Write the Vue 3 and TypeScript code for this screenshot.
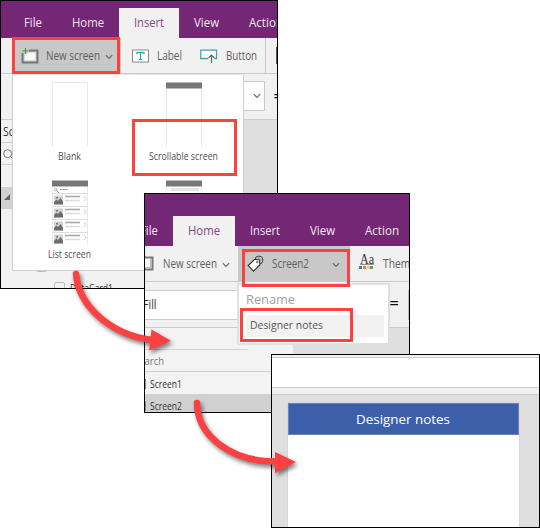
<script setup lang="ts">
import { defineComponent, h } from 'vue'

// Single-line label drawn at an exact width, baseline 14px below its top.
const Fit = defineComponent({
  props: {
    t: { type: String, required: true },
    w: { type: Number, required: true },
    s: { type: Number, default: 12.2 },
  },
  setup(p) {
    return () =>
      h('svg', { class: 'fit', width: p.w, height: 20 }, [
        h('text', { x: 0, y: 14, 'font-size': p.s, textLength: p.w, lengthAdjust: 'spacingAndGlyphs', fill: 'currentColor' }, p.t),
      ])
  },
})

interface Tab { name: string; w: number }
const tabs: Tab[] = [
  { name: 'File', w: 18 },
  { name: 'Home', w: 32 },
  { name: 'Insert', w: 30 },
  { name: 'View', w: 25 },
  { name: 'Action', w: 34 },
]
const rows = [0, 1, 2, 3]
</script>

<template>
  <main class="stage">
    <section class="win win-insert">
      <header class="ribbon">
        <span v-for="tab in tabs" :key="tab.name" class="tab" :class="{ active: tab.name === 'Insert' }">
          <Fit :t="tab.name" :w="tab.w" :s="12.6" />
        </span>
      </header>
      <div class="toolbar tools-insert">
        <div class="new-btn">
          <svg class="ic-new" width="18" height="16" viewBox="0 0 18 16">
            <path d="M1.5 5v9.500H16.500V2.500H8" fill="none" stroke="#777" stroke-width="2" />
            <path d="M3.500 6v6.500H14.500V4.500H8" fill="#f8f8f8" stroke="#ddd" />
            <path d="M4.500 0v6M1.500 3h6" stroke="#46a049" stroke-width="1.2" />
          </svg>
          <Fit t="New screen" :w="54" />
          <svg class="chev" width="8" height="6" viewBox="0 0 8 6"><path d="M.8 1.200L4 4.400 7.200 1.200" /></svg>
        </div>
        <svg class="ic-label" width="17" height="14" viewBox="0 0 17 14">
          <rect x=".5" y="1" width="16" height="12" fill="#fff" stroke="#8a8a8a" />
          <path d="M5 5V3.500h7V5M8.500 3.500v7M7 10.500h3" fill="none" stroke="#1fa5a5" stroke-width="1.200" />
        </svg>
        <Fit class="t-label" t="Label" :w="25" />
        <svg class="ic-button" width="18" height="15" viewBox="0 0 18 15">
          <path d="M8 9.500H.8V1.200H16.500v8.300h-2" fill="#fff" stroke="#35aaaa" stroke-width="1.300" />
          <path d="M11.500 14V6M8.500 9l3-3 3 3" fill="none" stroke="#666" stroke-width="1.200" />
        </svg>
        <Fit class="t-button" t="Button" :w="31" />
        <i class="divider"></i><i class="cut"></i>
      </div>
      <div class="formula f1">
        <div class="select"><svg class="chev" width="8" height="6" viewBox="0 0 8 6"><path d="M.8 1.200L4 4.400 7.200 1.200" /></svg></div>
        <span class="eq">=</span>
      </div>
      <div class="body1">
        <aside class="side1">
          <div class="s-title"><Fit t="Screens" :w="38" /></div>
          <div class="s-search">
            <svg width="11" height="11" viewBox="0 0 11 11"><circle cx="4.700" cy="4.700" r="4" fill="none" stroke="#777" /><path d="M7.500 7.500L10 10" stroke="#777" /></svg>
          </div>
          <div class="s-gap"></div>
          <div class="s-sel"><svg width="6" height="6" viewBox="0 0 6 6"><path d="M6 0v6H0z" fill="#666" /></svg></div>
          <div class="s-card2"><i></i></div>
          <div class="s-card"><i></i><Fit t="DataCard1" :w="43" :s="11" /></div>
        </aside>
        <div class="canvas"></div>
      </div>
      <div class="menu1">
        <div class="cell">
          <div class="thumb"></div>
          <Fit t="Blank" :w="23" :s="10.800" />
        </div>
        <div class="cell">
          <div class="thumb"><b></b></div>
          <Fit t="Scrollable screen" :w="69" :s="10.800" />
        </div>
        <div class="cell">
          <div class="thumb list">
            <b></b>
            <div class="find"><svg width="5" height="5" viewBox="0 0 5 5"><circle cx="1.700" cy="1.700" r="1.200" fill="none" stroke="#999" stroke-width=".8" /><path d="M2.600 2.600L5 5" stroke="#999" /></svg><i></i></div>
            <div v-for="r in rows" :key="r" class="row">
              <svg width="36" height="13" viewBox="0 0 36 13">
                <path d="M0 .5h36" stroke="#ddd" />
                <rect x="2" y="2.500" width="9" height="9" fill="#d2d2d2" />
                <path d="M2 11.500V9l2.500-2.500L6 8l2.500-3L11 8.500v3z" fill="#6d6d6d" />
                <circle cx="5" cy="4.800" r="1" fill="#777" />
                <path d="M13 3.500h15" stroke="#a8a8b0" stroke-width="1.600" />
                <path d="M13 7.500h15" stroke="#ddd" stroke-width="1.600" />
                <path d="M32 3l2 2.500-2 2.500" fill="none" stroke="#ccc" />
              </svg>
            </div>
          </div>
          <Fit t="List screen" :w="43" :s="10.800" />
        </div>
        <div class="cell">
          <div class="thumb"><b></b><div class="peek"></div></div>
        </div>
      </div>
      <div class="mark m-new"></div>
      <div class="mark m-scroll"></div>
    </section>

    <section class="win win-home">
      <header class="ribbon">
        <span v-for="tab in tabs" :key="tab.name" class="tab" :class="{ active: tab.name === 'Home' }">
          <Fit :t="tab.name" :w="tab.w" :s="12.6" />
        </span>
      </header>
      <div class="toolbar tools-home">
        <svg class="ic-new2" width="18" height="16" viewBox="0 0 18 16">
          <path d="M1.500 5v9.500H16.500V2.500H8" fill="#f8f8f8" stroke="#777" stroke-width="2" />
          <path d="M14.500 4v8.500H3" fill="none" stroke="#bbb" />
        </svg>
        <Fit t="New screen" :w="54" />
        <svg class="chev" width="8" height="6" viewBox="0 0 8 6"><path d="M.8 1.200L4 4.400 7.200 1.200" /></svg>
        <div class="screen-btn">
          <svg width="18" height="18" viewBox="0 0 18 18">
            <circle cx="12" cy="5" r="4" fill="none" stroke="#444" />
            <path d="M1.200 10.500L7.800 4.300l4.500.4.700 5-6.500 6.500z" fill="#fff" stroke="#333" stroke-width="1.100" />
            <path d="M12 1v4h4" stroke="#777" stroke-width=".8" fill="none" />
            <circle cx="10.300" cy="7" r=".9" fill="none" stroke="#444" stroke-width=".8" />
          </svg>
          <Fit t="Screen2" :w="37" />
          <svg class="chev" width="8" height="6" viewBox="0 0 8 6"><path d="M.8 1.200L4 4.400 7.200 1.200" /></svg>
        </div>
        <div class="theme-ic">
          <svg width="16" height="16" viewBox="0 0 16 16">
            <text x="1" y="10" class="aa" textLength="14" lengthAdjust="spacingAndGlyphs">Aa</text>
            <path d="M1 10.500h14" stroke="#666" stroke-width=".7" />
            <rect x="0" y="12" width="3" height="3" fill="#3b78bf" /><rect x="4" y="12" width="3" height="3" fill="#ee8132" />
            <rect x="8" y="12" width="3" height="3" fill="#ebcb88" /><rect x="11" y="12" width="3" height="3" fill="#55998a" />
          </svg>
        </div>
        <Fit t="Theme" :w="33" />
      </div>
      <div class="formula f2">
        <div class="field"><Fit t="Fill" :w="13.500" :s="12.8" /></div>
        <span class="eq">=</span>
        <i class="edge"></i>
      </div>
      <div class="body2">
        <aside class="side2">
          <div class="h-title"></div>
          <div class="h-search"><Fit t="Search" :w="30" :s="11" /></div>
          <div class="h-item"><i></i><Fit t="Screen1" :w="32" :s="11" /></div>
          <div class="h-item on"><i></i><Fit t="Screen2" :w="32" :s="11" /></div>
        </aside>
        <div class="canvas"></div>
      </div>
      <div class="menu2">
        <div class="m-rename"><Fit t="Rename" :w="49" :s="13.200" /></div>
        <div class="m-notes"><Fit t="Designer notes" :w="73" :s="11.400" /></div>
      </div>
      <div class="mark m-screen"></div>
      <div class="mark m-des"></div>
    </section>

    <section class="win win-notes">
      <div class="strip"></div>
      <div class="white"></div>
      <div class="strip low"></div>
      <div class="desk">
        <div class="page"><div class="title"><Fit t="Designer notes" :w="94" :s="13.400" /></div></div>
      </div>
    </section>

    <svg class="arrows" width="540" height="528" viewBox="0 0 540 528">
      <g>
        <path d="M76 274C78 303 107 334 152 340" class="tail" />
        <path d="M151.500 329.500L171 340.700 149 350.500z" class="head" />
      </g>
      <g>
        <path d="M197 403C197 434 229 462 277 461.500" class="tail" />
        <path d="M275 452L296 462 275 473z" class="head" />
      </g>
    </svg>
  </main>
</template>

<style>
body { background: #fff; overflow: hidden; }
.fit { display: block; overflow: visible; flex: none; }
</style>

<style scoped>
* { box-sizing: border-box; }
.stage { position: relative; width: 540px; height: 528px; overflow: hidden; background: #fff; font-family: "Open Sans", "Noto Sans", sans-serif; color: #606060; }
.win { position: absolute; border: 1px solid #000; overflow: hidden; background: #f1f1f1; display: flex; flex-direction: column; }
.win-insert { left: 0; top: 0; width: 278px; height: 289px; }
.win-home { left: 144px; top: 193px; width: 266px; height: 220px; }
.win-notes { left: 271px; top: 354px; width: 269px; height: 174px; }
.ribbon { display: flex; align-items: flex-end; flex: none; background: #742774; color: #f0e6f0; }
.win-insert .ribbon { height: 37px; padding-left: 7.500px; }
.win-home .ribbon { height: 52px; padding-left: 0; }
.win-home .tab:first-child { margin-left: -20.500px; }
.tab { flex: none; height: 30px; padding: 0 15px; display: flex; align-items: center; }
.tab.active { background: #f1f1f1; color: #86478a; }
.toolbar { display: flex; align-items: center; flex: none; height: 36px; border-bottom: 1px solid #cacaca; background: #f1f1f1; }
.toolbar > *, .new-btn > *, .screen-btn > * { flex: none; }
.chev path { fill: none; stroke: #666; stroke-width: 1.100; }
.new-btn { width: 109px; height: 36px; margin-left: 11px; background: #c8c8c8; display: flex; align-items: center; padding-left: 9px; }
.new-btn .ic-new { margin-right: 7px; }
.new-btn .chev { margin: 2px 0 0 5px; }
.ic-label { margin-left: 11px; }
.t-label { margin-left: 8px; }
.ic-button { margin-left: 18px; margin-top: 2px; }
.t-button { margin-left: 8px; }
.divider { width: 1px; height: 35px; margin-left: 8px; background: #ccc; }
.cut { width: 2px; height: 17px; margin-left: 10px; background: #555; }
.formula { display: flex; align-items: center; flex: none; background: #f1f1f1; border-bottom: 1px solid #ccc; }
.f1 { height: 46px; padding-left: 220px; }
.select { width: 44px; height: 30px; margin-top: -1px; flex: none; border: 1px solid #c9c9c9; background: #fff; display: flex; align-items: center; justify-content: flex-end; padding-right: 3px; }
.eq { flex: none; font-size: 17px; line-height: 20px; color: #111; }
.f1 .eq { margin-left: 8.500px; margin-top: -2px; }
.body1, .body2 { display: flex; flex: 1; min-height: 0; }
.side1 { width: 242px; flex: none; overflow: hidden; background: #f2f2f2; }
.canvas { flex: 1; background: #dfdfdf; }
.s-title { height: 23px; padding: 2px 0 0 2px; border-bottom: 1px solid #ccc; color: #333; }
.s-search { height: 22px; padding: 6px 0 0 2px; border-bottom: 1px solid #ccc; }
.s-search svg { display: block; }
.s-gap { height: 22px; }
.s-sel { height: 22px; background: #d1d1d1; padding: 7px 0 0 3px; display: flex; }
.s-card2 { height: 74px; display: flex; align-items: flex-end; padding-left: 35px; }
.s-card2 i { width: 11px; height: 11px; margin-bottom: 11px; border: 1px solid #bbb; border-radius: 2px; }
.s-card { display: flex; height: 22px; margin-top: -2px; padding-left: 53px; color: #333; }
.s-card i { width: 11px; height: 11px; margin: 1px 5px 0 0; border: 1px solid #bbb; border-radius: 2px; }
.s-card .fit { margin-top: -3px; }
.menu1 { position: absolute; left: 11px; top: 73px; width: 232px; height: 197px; background: #fff; border: 1px solid #cfcfcf; border-top-color: #e6e6e6; display: grid; grid-template-columns: 114px 114px; grid-template-rows: 98px 98px; padding-top: 7px; overflow: hidden; }
.cell { display: flex; flex-direction: column; align-items: center; color: #505050; font-weight: 500; }
.cell .fit { margin-top: -1px; margin-left: -1px; }
.thumb { width: 36px; height: 65px; border: 1px solid #e8e8e8; border-width: 1px 1px 0; display: flex; flex-direction: column; flex: none; }
.thumb b { height: 7px; margin: -1px -1px 0; border: 1px solid #bbb; border-width: 1px 0; background: #757779; flex: none; }
.list .find { height: 6px; display: flex; gap: 1px; padding: 1px 0 0 1px; flex: none; }
.find i { width: 8px; height: 1px; background: #aaa; margin-top: 1px; }
.row { height: 13.300px; margin-left: -1px; }
.row svg { display: block; }
.peek { height: 10px; margin: 1px 2px 0 4px; border-top: 3px solid #e5e5e5; border-right: 1px solid #eee; }
.mark { position: absolute; border: 3px solid #fb4141; }
.m-new { left: 11px; top: 36px; width: 108px; height: 37px; }
.m-scroll { left: 131px; top: 118px; width: 105px; height: 57px; }
.ic-new2 { margin-left: -9px; margin-right: 9px; margin-top: -1px; }
.tools-home > .chev { margin: 2px 0 0 5px; }
.screen-btn { width: 112px; height: 35px; margin-left: 8px; background: #c8c8c8; display: flex; align-items: center; padding-left: 9px; }
.screen-btn .fit { margin-left: 7px; }
.screen-btn .chev { margin: 2px 0 0 23px; }
.theme-ic { margin: -4px 8px 0 9px; height: 16px; }
.theme-ic svg { display: block; }
.aa { font: 14px "Liberation Serif", serif; fill: #333; }
.f2 { height: 46px; border-bottom: 1px solid #ccc; }
.field { width: 244px; height: 30px; flex: none; border: 1px solid #ccc; border-left: 0; background: #fff; padding: 4px 0 0 0; color: #333; }
.field .fit { margin-left: -2px; }
.f2 .eq { width: 10px; text-align: center; margin: -3px 0 0 0; }
.f2 .edge { width: 1px; height: 30px; margin-left: 9px; background: #bbb; }
.side2 { width: 148px; background: #f3f3f3; overflow: hidden; flex: none; }
.h-title { width: 103px; height: 22px; border-bottom: 1px solid #d2d2d2; }
.h-search { height: 22px; border-bottom: 1px solid #ccc; color: #777; padding-top: 1px; }
.h-search .fit { margin-left: -11px; }
.h-item { display: flex; align-items: center; height: 22px; color: #333; gap: 4px; padding-top: 2px; }
.h-item i { width: 1px; height: 10px; background: #888; }
.h-item.on { background: #d1d1d1; }
.menu2 { position: absolute; left: 92px; top: 89px; width: 153px; height: 62px; border: 2px solid #e0e0e0; background: #fff; padding: 5px 4px 6px 7px; }
.m-rename { height: 26px; color: #a0a0a0; }
.m-notes { height: 22px; background: #f2f2f2; padding-left: 4px; color: #555; }
.m-notes .fit { margin-top: -1px; }
.m-screen { left: 97px; top: 55px; width: 108px; height: 38px; }
.m-des { left: 95px; top: 114px; width: 113px; height: 34px; }
.strip { height: 3px; flex: none; border-bottom: 1px solid #ccc; background: #f1f1f1; }
.white { height: 29px; flex: none; background: #fff; }
.strip.low { height: 8px; border-top: 1px solid #ccc; }
.desk { flex: 1; background: #dfdfdf; padding: 8px 0 0 16px; display: flex; }
.page { width: 231px; background: #fff; box-shadow: 0 0 1px #aaa; }
.title { height: 32px; border: 1px solid #6984c0; background: #3d5fa9; color: #fff; display: flex; justify-content: center; padding: 6px 2px 0 0; }
.arrows { position: absolute; left: 0; top: 0; pointer-events: none; }
.arrows g { filter: drop-shadow(2px 3px 2px rgba(0, 0, 0, .5)); }
.tail { fill: none; stroke: #fb4141; stroke-width: 6.500; stroke-linecap: round; }
.head { fill: #fb4141; }
</style>
